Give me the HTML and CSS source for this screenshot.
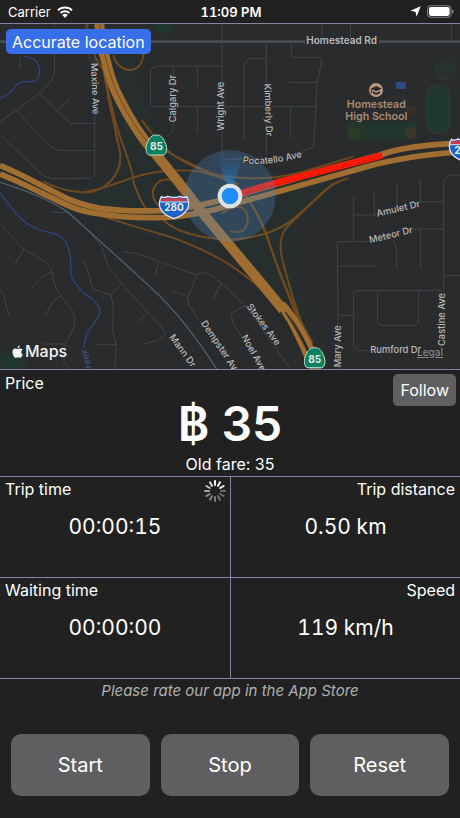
FILE: index.html
```html
<!DOCTYPE html>
<html lang="en">
<head>
<meta charset="utf-8">
<meta name="viewport" content="width=device-width, initial-scale=1">
<title>Taximeter</title>
<link rel="stylesheet" href="styles.css">
</head>
<body>
<header class="status">
  <div class="status-side">
    <span>Carrier</span>
    <svg class="wifi" viewBox="0 0 48 36" aria-hidden="true">
      <path d="M3 13C14 2 34 2 45 13" fill="none" stroke="#fff" stroke-width="6"/>
      <path d="M11 21C18 14 30 14 37 21" fill="none" stroke="#fff" stroke-width="6"/>
      <path d="M16 27C20 22 28 22 32 27L24 36Z" fill="#fff"/>
    </svg>
  </div>
  <span class="clock">11:09 PM</span>
  <div class="status-side status-right">
    <svg class="arrow" viewBox="0 0 32 32" aria-hidden="true"><path d="M31 1L19 31L16 17L1 14Z" fill="#fff"/></svg>
    <svg class="battery" viewBox="0 0 80 38" aria-hidden="true">
      <rect x="2" y="2" width="69" height="34" rx="10" fill="none" stroke="#858585" stroke-width="3"/>
      <rect x="6" y="6" width="61" height="26" rx="6" fill="#fff"/>
      <path d="M74 13q5 2 5 6t-5 6Z" fill="#858585"/>
    </svg>
  </div>
</header>

<main>
<section class="map" aria-label="Map">
  <svg class="map-art" viewBox="0 12 1380 1035" preserveAspectRatio="xMidYMid slice">
    <defs>
      <linearGradient id="cone" x1="0" y1="0" x2="0" y2="1">
        <stop offset="0" stop-color="#2772b8" stop-opacity="0"/>
        <stop offset="1" stop-color="#2384e8" stop-opacity=".85"/>
      </linearGradient>
      <filter id="soft"><feGaussianBlur stdDeviation="14"/></filter>
      <path id="pocatello" d="M728 429Q800 440 912 409"/>
      <g id="state-route">
        <path d="M0-31C13-31 21-23 25-11C31 0 33 12 28 24Q26 29 20 29H-20Q-26 29-28 24C-33 12-31 0-25-11C-21-23-13-31 0-31Z" fill="#0b8160" stroke="#b9dccc" stroke-width="3"/>
        <text class="shield" x="0" y="15">85</text>
      </g>
      <g id="interstate">
        <path d="M-38-30Q-28-25-19-31Q0-25 19-31Q28-25 38-30Q48-11 41 5Q32 26 0 36Q-32 26-41 5Q-48-11-38-30Z" fill="#1c62c5" stroke="#dfe4ee" stroke-width="4"/>
        <path d="M-35-25Q-28-22-19-27Q0-22 19-27Q28-22 35-25L39-16H-39Z" fill="#d03b47"/>
        <path d="M-41-14H41" stroke="#dfe4ee" stroke-width="3"/>
      </g>
    </defs>
    <rect y="0" width="1380" height="1060" fill="#292b2d"/>

    <!-- Parkland -->
    <g fill="#262e2f" filter="url(#soft)">
      <path d="M320 100L440 100L400 160L520 420L690 490L560 520L410 540L350 480L370 380Z"/>
      <path d="M200 520L420 460L640 470L1030 480L850 650L940 960L850 870L680 700L300 590L350 700Z"/>
      <path d="M0 1000H70V1050H0Z" fill="#1f3b2f"/>
    </g>
    <path d="M455 12H525Q520 40 490 42Q462 40 455 12Z" fill="#20372f"/>
    <path d="M1042 305H1250V355L1090 365L1042 360Z" fill="#22362d"/>
    <path d="M1045 320l35 5 5 28-35 6Z" fill="#2b3c29"/>
    <circle cx="1232" cy="338" r="18" fill="#3c372d"/><circle cx="1232" cy="270" r="16" fill="#35322e"/>
    <rect x="1301" y="127" width="64" height="31" rx="4" fill="#28322f"/><rect x="1303" y="162" width="62" height="19" rx="4" fill="#28322f"/>
    <rect x="1276" y="192" width="76" height="152" rx="34" fill="#2b3531"/>
    <rect x="1284" y="202" width="60" height="134" rx="28" fill="#1f3930"/>
    <rect x="1188" y="186" width="30" height="21" rx="3" fill="#2e4b86"/>

    <!-- Local streets -->
    <g class="street">
      <path d="M60 110V147M163 12V160Q162 180 118 220L50 270L0 305M118 220L172 274L212 310H284M172 274L209 236M284 100V455Q284 475 265 475H155Q138 475 120 458L0 345M50 270L115 345Q155 390 182 392H284M255 12Q250 80 284 150"/>
      <path d="M666 12V405Q666 418 680 418H727M661 138H472Q451 141 451 160V245Q451 260 468 260H950M521 140V310Q520 340 500 349M592 142V204M592 262V340M799 70V405M732 360V145Q732 115 760 115H799M874 70V103Q874 112 886 112H945Q968 112 964 130L951 187L948 260L941 370Q940 386 925 386L890 405M865 187H951M872 262V355M799 415H700"/>
      <path d="M966 12V62M1051 12V62M1354 12V62"/>
      <path d="M1060 532V662M1060 585H1130M1121 512L1124 584M1191 492V565M1261 476V545L1330 546M1380 465H1358Q1331 465 1331 492V815L1326 838M1013 665H1120M1012 665L1015 1047M1235 627H1331M1262 627V746M1180 660L1190 685V747M1015 738H1128M1331 767H1380M1326 811H1075Q1061 811 1061 825V975Q1063 992 1080 992H1105M1015 886H1061M1133 812V900Q1133 916 1150 916H1238Q1256 916 1256 900V813"/>
      <path d="M0 608Q40 660 72 687L125 718Q156 735 160 775Q165 805 183 828L215 870Q230 890 222 920L192 980V1030L212 1047M72 687L45 732M158 755Q130 760 92 807M183 828Q155 840 138 885M192 972H130M0 810Q15 820 18 855L28 885M155 577H205Q240 600 305 680L325 740L365 790L500 940L475 960L432 973M365 790L333 825L280 808Q270 790 268 765L252 725M333 825L340 860L338 935L348 970L345 1047M288 973H349M442 878L411 907M372 696L410 700L476 724L590 765L604 758L626 762L665 790L738 858L868 1042M476 724L467 765M590 765L564 830L566 855L605 910M564 830L515 812M665 790L638 838M738 858Q708 865 692 886L700 912L725 950"/>
    </g>
    <path d="M0 65H915M1137 65H1380" fill="none" stroke="#4a4d50" stroke-width="8"/>
    <g fill="none" stroke="#2d457e" stroke-width="4">
      <path d="M72 110Q120 112 118 155Q116 185 95 185H68Q54 187 39 208Q20 229 0 234"/>
      <path d="M0 520Q35 565 60 593Q90 622 135 635Q188 641 202 674Q214 700 212 762Q218 785 250 818Q303 854 300 875Q299 890 274 920Q255 940 252 981"/>
    </g>
    <path d="M0 487Q130 527 200 574Q330 690 450 800Q550 890 650 1047" fill="none" stroke="#4c626b" stroke-width="4"/>

    <!-- Ramps -->
    <g class="ramp">
      <path d="M431 100Q425 150 390 150Q350 146 340 105M304 100Q325 230 358 385Q370 440 335 480Q300 520 245 517Q190 515 130 485M308 135Q345 320 378 400Q405 480 400 485Q425 560 450 577M262 12Q260 80 310 150L330 260Q345 320 352 365"/>
      <path d="M250 517Q315 505 390 475Q500 440 600 455Q690 475 710 500Q770 560 800 650Q850 790 900 900L938 970"/>
      <path d="M425 300Q490 390 535 415Q620 465 690 470Q800 485 910 455L1060 410M465 375Q580 440 715 493"/>
      <path d="M560 495Q510 470 480 483Q445 510 466 545Q475 563 500 570M490 600Q540 650 690 660Q810 650 870 605Q930 555 970 515Q1010 482 1045 475M1000 490Q880 600 855 628Q835 660 845 710Q880 850 910 920L940 990"/>
      <path d="M665 580Q720 545 738 575Q752 605 730 632Q710 642 690 632M740 530Q790 600 815 690Q850 800 930 975"/>
      <path d="M310 590Q420 625 510 650Q620 690 690 735Q760 780 830 850L860 900"/>
    </g>

    <!-- Freeways -->
    <g class="freeway">
      <path d="M0 436Q35 451 70 468L170 520Q230 553 300 565Q380 575 480 572Q580 565 700 530L1000 443L1140 405Q1220 375 1380 370"/>
      <path d="M0 462Q50 482 100 507L190 550Q240 575 300 582Q380 596 500 592Q600 585 690 555L860 508L1100 440Q1220 407 1380 396"/>
    </g>
    <path d="M298 12Q300 65 318 125Q335 195 360 240Q405 330 465 400Q540 490 600 570L790 797L850 870" fill="none" stroke="#a16e31" stroke-width="30"/>
    <path d="M836 850Q875 905 922 1015M848 850Q900 905 948 1015" fill="none" stroke="#a16e31" stroke-width="15"/>
    <path d="M300 12Q302 65 320 125Q338 195 362 240Q390 300 445 370" fill="none" stroke="#704a21" stroke-width="3"/>
    <path d="M856 876Q893 930 933 1015" fill="none" stroke="#3b3026" stroke-width="4"/>
    <path d="M945 990V1047" stroke="#8a6131" stroke-width="36"/>

    <!-- Current position and travelled route -->
    <path d="M720 520L825 490L1147 406" fill="none" stroke="#fc1a05" stroke-width="20"/>
    <path d="M740 519L1140 412" fill="none" stroke="#d5190c" stroke-width="4" stroke-dasharray="14 10"/>
    <circle cx="690" cy="528" r="137" fill="#4b8dc9" fill-opacity=".28"/>
    <path d="M690 528L652 410Q690 398 728 410Z" fill="url(#cone)"/>
    <circle cx="690" cy="528" r="37" fill="#dfe2e3"/>
    <circle cx="690" cy="528" r="25" fill="#218cfa"/>

    <use href="#state-route" x="469" y="376"/>
    <use href="#state-route" x="944" y="1014"/>
    <use href="#interstate" x="522" y="560"/>
    <text class="shield" x="522" y="574">280</text>
    <use href="#interstate" x="1392" y="388"/>
    <text class="shield" x="1392" y="402">280</text>

    <!-- School marker -->
    <circle cx="1128" cy="210" r="21" fill="#b99a80"/>
    <path d="M1112 206L1129 198L1145 206L1129 214ZM1118 213L1129 219L1140 213V220Q1129 228 1118 220Z" fill="#2b2928"/>
    <path d="M1114 208V220" stroke="#2b2928" stroke-width="3"/>
    <g class="school"><text x="1129" y="265">Homestead</text><text x="1129" y="300">High School</text></g>

    <g class="label">
      <text class="major" x="919" y="72">Homestead Rd</text>
      <text transform="translate(273 129) rotate(88)">Maxine Ave</text>
      <text transform="translate(529 307) rotate(-90)">Calgary Dr</text>
      <text transform="translate(671 332) rotate(-90)">Wright Ave</text>
      <text transform="translate(793 191) rotate(88)">Kimberly Dr</text>
      <text><textPath href="#pocatello">Pocatello Ave</textPath></text>
      <text transform="translate(1132 590) rotate(-13)">Amulet Dr</text>
      <text transform="translate(1110 670) rotate(-14)">Meteor Dr</text>
      <text transform="translate(1335 978) rotate(-90)">Castine Ave</text>
      <text transform="translate(1023 1042) rotate(-90)">Mary Ave</text>
      <text x="1111" y="1000">Rumford Dr</text>
      <text transform="translate(507 952) rotate(54)">Mann Dr</text>
      <text transform="translate(602 910) rotate(56)">Dempster Ave</text>
      <text transform="translate(724 951) rotate(61)">Noel Ave</text>
      <text transform="translate(739 860) rotate(53)">Stokes Ave</text>
      <text class="water" transform="translate(280 1062) rotate(-105)">Creek</text>
    </g>
  </svg>
  <span class="accuracy">Accurate location</span>
  <span class="brand">
    <svg viewBox="0 0 32 38" aria-hidden="true"><path d="M22 1Q23 8 16 10Q15 4 22 1ZM16 12C19 11 21 10 24 10Q28 10 31 14C25 18 26 26 32 28C29 35 26 38 23 37C19 35 16 35 13 37C9 39 5 34 3 29C0 21 1 14 6 11C10 9 13 12 16 12Z" fill="#f4f4f4"/></svg>
    Maps
  </span>
  <a class="legal" href="#legal">Legal</a>
</section>

<section class="price">
  <h2 class="label-text">Price</h2>
  <button class="follow" type="button">Follow</button>
  <p class="amount">฿ 35</p>
  <p class="old-fare">Old fare: 35</p>
</section>

<section class="stats">
  <div class="stat">
    <h2 class="label-text">Trip time</h2>
    <p class="value">00:00:15</p>
    <svg class="spinner" viewBox="-12 -12 24 24" role="img" aria-label="Running">
      <g stroke="#fff" stroke-width="2" stroke-linecap="round">
        <path d="M0-6V-10"/>
        <path d="M0-6V-10" transform="rotate(30)"/>
        <path d="M0-6V-10" transform="rotate(60)"/>
        <path d="M0-6V-10" transform="rotate(90)" opacity=".35"/>
        <path d="M0-6V-10" transform="rotate(120)" opacity=".35"/>
        <path d="M0-6V-10" transform="rotate(150)" opacity=".38"/>
        <path d="M0-6V-10" transform="rotate(180)" opacity=".42"/>
        <path d="M0-6V-10" transform="rotate(210)" opacity=".45"/>
        <path d="M0-6V-10" transform="rotate(240)" opacity=".5"/>
        <path d="M0-6V-10" transform="rotate(270)" opacity=".6"/>
        <path d="M0-6V-10" transform="rotate(300)" opacity=".7"/>
        <path d="M0-6V-10" transform="rotate(330)" opacity=".85"/>
      </g>
    </svg>
  </div>
  <div class="stat stat-right">
    <h2 class="label-text">Trip distance</h2>
    <p class="value">0.50 km</p>
  </div>
  <div class="stat">
    <h2 class="label-text">Waiting time</h2>
    <p class="value">00:00:00</p>
  </div>
  <div class="stat stat-right">
    <h2 class="label-text">Speed</h2>
    <p class="value">119 km/h</p>
  </div>
</section>

<p class="rate">Please rate our app in the App Store</p>

<div class="actions">
  <button type="button">Start</button>
  <button type="button">Stop</button>
  <button type="button">Reset</button>
</div>
</main>
</body>
</html>
```

FILE: styles.css
```css
:root {
  --line: #8585a3;
  --panel: #212121;
  --button: #5f5f61;
}

* {
  box-sizing: border-box;
}

body {
  margin: 0;
  min-height: 100vh;
  background: var(--panel);
  color: #fff;
  font-family: Inter, "Liberation Sans", sans-serif;
  font-size: 16px;
  line-height: 20px;
}

h2,
p {
  margin: 0;
}

button {
  border: 0;
  background: var(--button);
  color: inherit;
  font: inherit;
}

.status {
  display: grid;
  grid-template-columns: 1fr auto 1fr;
  align-items: center;
  height: 24px;
  padding: 0 6px 0 8px;
  border-bottom: 1px solid var(--line);
  font-size: 13px;
}

.status-side {
  display: flex;
  align-items: center;
  gap: 6px;
}

.status-right {
  justify-content: flex-end;
}

.clock {
  font-weight: 600;
  font-variant-numeric: tabular-nums;
}

.wifi {
  width: 16px;
  height: 12px;
}

.arrow {
  width: 11px;
  height: 11px;
}

.battery {
  width: 27px;
  height: 13px;
}

.map {
  position: relative;
  overflow: hidden;
  border-bottom: 1px solid var(--line);
}

.map-art {
  display: block;
  width: 100%;
}

.street {
  fill: none;
  stroke: #424547;
  stroke-width: 3;
}

.ramp {
  fill: none;
  stroke: #70491f;
  stroke-width: 6;
}

.freeway {
  fill: none;
  stroke: #a16e31;
  stroke-width: 17;
}

.label {
  fill: #b9babb;
  stroke: #292b2d;
  stroke-width: 4px;
  paint-order: stroke;
  font-size: 28px;
  font-weight: 500;
}

.major {
  font-size: 30px;
  font-weight: 600;
}

.water {
  fill: #3f5590;
}

.school {
  fill: #a88b73;
  font-size: 32px;
  font-weight: 600;
  text-anchor: middle;
}

.shield {
  fill: #e6ebea;
  font-size: 30px;
  font-weight: 700;
  text-anchor: middle;
}

.accuracy {
  position: absolute;
  top: 5px;
  left: 6px;
  padding: 3px 6px 2px;
  border-radius: 5px;
  background: #376eea;
}

.brand {
  position: absolute;
  bottom: 8px;
  left: 12px;
  display: flex;
  align-items: center;
  gap: 2px;
  color: #f4f4f4;
  font-weight: 500;
}

.brand svg {
  width: 11px;
  height: 13px;
}

.legal {
  position: absolute;
  right: 17px;
  bottom: 7px;
  color: #858687;
  font-size: 10px;
  font-weight: 500;
}

.label-text {
  font-size: 16px;
  font-weight: 400;
}

.price {
  position: relative;
  padding: 3px 5px 2px;
  border-bottom: 1px solid var(--line);
  text-align: center;
}

.price .label-text {
  text-align: left;
}

.follow {
  position: absolute;
  top: 4px;
  right: 4px;
  height: 32px;
  padding: 0 7px;
  border-radius: 5px;
}

.amount {
  font-size: 48px;
  font-weight: 600;
  line-height: 61px;
}

.stats {
  display: grid;
  grid-template-columns: 1fr 1fr;
}

.stat {
  position: relative;
  min-height: 101px;
  padding: 2px 5px;
  border-bottom: 1px solid var(--line);
}

.stat-right {
  border-left: 1px solid var(--line);
}

.stat-right .label-text {
  text-align: right;
}

.value {
  margin-top: 13px;
  font-size: 21px;
  font-variant-numeric: tabular-nums;
  line-height: 30px;
  text-align: center;
}

.spinner {
  position: absolute;
  top: 2px;
  right: 3px;
  width: 24px;
  height: 24px;
}

.rate {
  padding-top: 2px;
  color: #b0b0b0;
  font-size: 15px;
  font-style: italic;
  text-align: center;
}

.actions {
  display: grid;
  grid-template-columns: repeat(3, 1fr);
  gap: 11px;
  padding: 33px 11px 22px;
}

.actions button {
  height: 62px;
  border-radius: 10px;
  font-size: 20px;
}
```
